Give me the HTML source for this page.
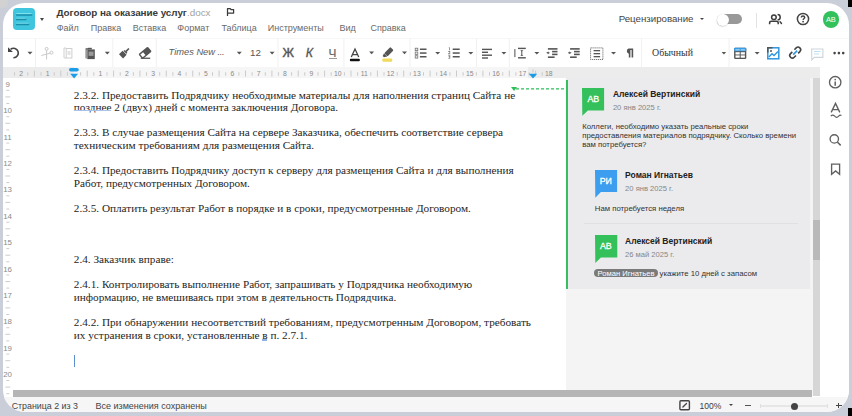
<!DOCTYPE html>
<html><head><meta charset="utf-8">
<style>
*{box-sizing:border-box;margin:0;padding:0}
html,body{width:852px;height:416px;overflow:hidden;background:#c9ced9;font-family:"Liberation Sans",sans-serif}
.a{position:absolute}
#win{position:absolute;left:3px;top:3px;width:846px;height:408.6px;border-radius:22px;background:#fff;overflow:hidden}
#c{position:absolute;left:-3px;top:-3px;width:852px;height:416px}
.t{position:absolute;white-space:nowrap;line-height:1}
.sep{position:absolute;width:1px;background:#ececec}
.car{position:absolute;width:0;height:0;border-left:2.5px solid transparent;border-right:2.5px solid transparent;border-top:2.5px solid #555}
.doc{position:absolute;left:73.8px;font-family:"Liberation Serif",serif;font-size:11.24px;color:#262626;white-space:nowrap;line-height:1}
.cm{font-size:7.75px;color:#333}
</style></head><body>
<div class="a" style="left:0;top:0;width:8px;height:8px;background:radial-gradient(circle at 0 0,#d2d2d2 55%,#c9ced9 100%)"></div>
<div class="a" style="left:848px;top:0;width:4px;height:7px;background:#000"></div>
<div class="a" style="left:848px;top:408px;width:4px;height:8px;background:#000"></div>
<div id="win"><div id="c">

<!-- HEADER -->
<div class="a" style="left:13px;top:8px;width:22px;height:22px;border-radius:4px;background:#3fc5de"></div>
<svg class="a" style="left:13px;top:8px" width="22" height="22" viewBox="13 8 22 22"><g stroke="#86e6f5" stroke-width="1"><path d="M16.4 13.6H31.5M16.4 18.3H25.5M16.4 23.3H28.5"/></g><g stroke="#1a8ea9" stroke-width="1.5" stroke-linecap="round"><path d="M16.6 15H31.6M16.6 19.6H25.8M16.6 24.5H28.6"/></g></svg>
<div class="car" style="left:39.5px;top:18px;border-left-width:2.6px;border-right-width:2.6px;border-top:3px solid #444"></div>

<div class="t" style="left:56.4px;top:7.6px;font-size:9.9px;font-weight:bold;color:#3a3a3a;letter-spacing:-0.05px">Договор на оказание услуг<span style="font-weight:normal;color:#a3a3a3;letter-spacing:0">.docx</span></div>
<svg class="a" style="left:224px;top:6px" width="12" height="12" viewBox="224 6 12 12"><path d="M227.5 16V8.7H230.3L231 9.5H233.6V13.1H227.5" fill="none" stroke="#3a3a3a" stroke-width="1.25" stroke-linejoin="round"/></svg>

<div class="t" style="left:56.7px;top:24.3px;font-size:9px;color:#6a6a6a">Файл</div>
<div class="t" style="left:90.8px;top:24.3px;font-size:9px;color:#6a6a6a">Правка</div>
<div class="t" style="left:132.7px;top:24.3px;font-size:9px;color:#6a6a6a">Вставка</div>
<div class="t" style="left:177.3px;top:24.3px;font-size:9px;color:#6a6a6a">Формат</div>
<div class="t" style="left:221.4px;top:24.3px;font-size:9px;color:#6a6a6a">Таблица</div>
<div class="t" style="left:267.7px;top:24.3px;font-size:9px;color:#6a6a6a">Инструменты</div>
<div class="t" style="left:339.6px;top:24.3px;font-size:9px;color:#6a6a6a">Вид</div>
<div class="t" style="left:370.4px;top:24.3px;font-size:9px;color:#6a6a6a">Справка</div>

<div class="t" style="left:618.7px;top:14.2px;font-size:9.7px;color:#444">Рецензирование</div>
<div class="car" style="left:700px;top:18px;border-left-width:2.4px;border-right-width:2.4px;border-top:2.5px solid #444"></div>
<div class="a" style="left:724px;top:14px;width:18.2px;height:9.8px;border-radius:0 4.9px 4.9px 0;background:#999"></div>
<div class="a" style="left:717.1px;top:13.9px;width:12.2px;height:12.2px;border-radius:50%;background:#fff;box-shadow:-0.3px 0.6px 1.2px rgba(0,0,0,.28)"></div>
<div class="sep" style="left:756px;top:12.5px;height:15px;background:#e3e3e3"></div>
<svg class="a" style="left:766px;top:11px" width="20" height="16" viewBox="766 11 20 16"><g fill="none" stroke="#3c3c3c" stroke-width="1.5"><circle cx="773.9" cy="17.3" r="2.3"/><path d="M769.6 24.2V23Q769.6 21.3 771.4 21.3H776.4Q778.2 21.3 778.2 23V24.2"/><path d="M777.6 14.6A2.6 2.6 0 0 1 777.6 19.8"/><path d="M779.6 21.4Q781.3 22.3 781.6 24.2"/></g></svg>
<svg class="a" style="left:796px;top:12.2px" width="14" height="14"><circle cx="7" cy="7" r="5.6" fill="none" stroke="#444" stroke-width="1.5"/><path d="M5.3 5.5C5.3 4.5 6 3.9 7 3.9S8.7 4.5 8.7 5.4C8.7 6.4 7.2 6.6 7.1 7.9" fill="none" stroke="#444" stroke-width="1.5"/><rect x="6.3" y="8.9" width="1.6" height="1.5" fill="#444"/></svg>
<div class="a" style="left:822.5px;top:11.3px;width:16.4px;height:16.4px;border-radius:50%;background:#33c15b"></div>
<div class="t" style="left:822.5px;width:16.4px;text-align:center;top:15.6px;font-size:7.4px;color:#fff;letter-spacing:-0.3px">AB</div>

<div class="a" style="left:3px;top:38px;width:846px;height:1px;background:#f7f7f7"></div>

<!-- TOOLBAR -->
<svg class="a" style="left:0;top:0" width="852" height="68" viewBox="0 0 852 68">
<g fill="#f1f1f1">
<rect x="35" y="38.5" width="1" height="28.5"/>
<rect x="112.3" y="38.5" width="1" height="28.5"/>
<rect x="155.8" y="38.5" width="1" height="28.5"/>
<rect x="277.5" y="38.5" width="1" height="28.5"/>
<rect x="343.4" y="38.5" width="1" height="28.5"/>
<rect x="409.5" y="38.5" width="1" height="28.5"/>
<rect x="476" y="38.5" width="1" height="28.5"/>
<rect x="508.8" y="38.5" width="1" height="28.5"/>
<rect x="641" y="38.5" width="1" height="28.5"/>
<rect x="728.6" y="38.5" width="1" height="28.5"/>
</g>
<g fill="#555">
<path d="M27.5 51.7h5l-2.5 2.8z"/>
<path d="M104.8 51.8h5l-2.5 2.6z"/>
<path d="M236.8 51.8h5l-2.5 2.6z"/>
<path d="M269.6 51.8h5l-2.5 2.6z"/>
<path d="M369.1 51.6h5l-2.5 2.6z"/>
<path d="M402 51.6h5l-2.5 2.6z"/>
<path d="M435.2 51.9h5l-2.5 2.6z"/>
<path d="M468.3 51.9h5l-2.5 2.6z"/>
<path d="M501.4 51.9h5l-2.5 2.6z"/>
<path d="M534.3 51.9h5l-2.5 2.6z"/>
<path d="M611 51.9h5l-2.5 2.6z"/>
<path d="M721.6 51.9h4.6l-2.3 2.6z"/>
<path d="M754.6 51.9h5l-2.5 2.6z"/>
</g>
<!-- undo -->
<path d="M10.6 49.4A4.7 4.7 0 1 1 13.4 57.7" fill="none" stroke="#444" stroke-width="1.6"/>
<path d="M8 47.2V52.1H12.9Z" fill="#444"/>
<!-- scissors -->
<g fill="none" stroke="#c9c9c9" stroke-width="1">
<circle cx="46.6" cy="48.9" r="1.5"/><circle cx="51.5" cy="52.7" r="1.5"/>
<path d="M46.6 50.4V59.5M41.3 55.5L50.1 53.2"/>
</g>
<!-- copy -->
<g fill="none" stroke="#cfcfcf" stroke-width="1">
<path d="M66 48H64V57.9H66"/><rect x="66.2" y="48.5" width="5.7" height="9.5"/>
</g>
<rect x="67.5" y="51" width="3" height="4" fill="#e3e3e3"/>
<!-- paste -->
<path d="M85.6 48.2H88.6V49.4H86.6V58.5H85.6Z" fill="#555"/>
<rect x="87.3" y="49.4" width="7.5" height="9.7" fill="#555"/>
<rect x="88.6" y="51.6" width="4.9" height="4.3" fill="#9a9a9a"/>
<rect x="87.8" y="47.8" width="4" height="1.6" fill="#555"/>
<!-- brush -->
<g transform="translate(123.9 53.1) rotate(45) scale(0.9)" fill="#555">
<rect x="-0.6" y="-7.6" width="1.8" height="5"/>
<rect x="-2" y="-3" width="4.6" height="1.6"/>
<rect x="-2.9" y="-0.8" width="6.4" height="5.6"/>
</g>
<!-- eraser -->
<g transform="translate(145.3 52.8) rotate(-40)">
<rect x="-6.3" y="-3.3" width="12.2" height="6.4" rx="1.2" fill="#555"/>
<rect x="-4.9" y="-1.9" width="3.6" height="3.7" fill="#fff"/>
</g>
<rect x="140.8" y="57.6" width="9.4" height="1.3" fill="#555"/>
<!-- font color A -->
<path d="M351.3 57.1L355 49.1L358.7 57.1M352.5 54.7H357.5" fill="none" stroke="#444" stroke-width="1.3"/>
<rect x="349.9" y="58.7" width="10" height="2.5" rx="1" fill="#111"/>
<!-- highlighter -->
<g transform="translate(388 52.6) rotate(45)" fill="#555">
<rect x="-2.3" y="-5.6" width="4.6" height="8.6" rx="1"/>
<path d="M-2.3 3.3H2.3L0.4 6.2H-1.3Z"/>
</g>
<rect x="382.3" y="58.4" width="9.9" height="3.3" rx="1" fill="#f1da5c"/>
<!-- bullet list -->
<g fill="#555">
</g><g fill="#e8e8e8" stroke="#777" stroke-width="0.8"><rect x="415.2" y="48.2" width="2.6" height="2.4"/><rect x="415.2" y="52" width="2.6" height="2.4"/><rect x="415.2" y="55.7" width="2.6" height="2.4"/></g><g fill="#555">
<rect x="419.9" y="48.5" width="6.6" height="1.5"/><rect x="419.9" y="52.3" width="6.6" height="1.5"/><rect x="419.9" y="56" width="6.6" height="1.5"/>
<path d="M448.6 47.6L449.6 47.2V50.3H449V48.1Z"/><path d="M448.3 51.3H450.2V52.6L448.9 53.6H450.3V54.2H448.3V53.6L449.6 52.5V51.9H448.3Z"/><path d="M448.3 55.2H450.2V58.6H448.3V58H449.6V57.2H448.6V56.6H449.6V55.8H448.3Z"/>
<rect x="452.7" y="48.5" width="7" height="1.5"/><rect x="452.7" y="52.3" width="7" height="1.5"/><rect x="452.7" y="56" width="7" height="1.5"/>
</g>
<!-- align left -->
<g fill="#555">
<rect x="482" y="48.7" width="10" height="1.4"/><rect x="482" y="51.6" width="6" height="1.4"/><rect x="482" y="54.5" width="10" height="1.4"/><rect x="482" y="57.3" width="6" height="1.4"/>
</g>
<!-- line spacing -->
<g fill="#555">
<rect x="518" y="47.7" width="7.8" height="1.4"/><rect x="518" y="57.1" width="7.8" height="1.4"/>
<rect x="521.3" y="50.4" width="1" height="5.3"/><path d="M520.2 50.3H523.4L521.8 51.6Z"/><path d="M520.2 55.8H523.4L521.8 54.5Z"/>
</g>
<rect x="514.2" y="49.1" width="1.3" height="8" fill="#777"/>
<!-- decrease indent -->
<g fill="#555">
<rect x="547.9" y="48.1" width="9.6" height="1.6"/><rect x="552.1" y="50.8" width="5.4" height="1.6"/><rect x="552.1" y="53.6" width="5.4" height="1.6"/><rect x="547.9" y="56.4" width="6.7" height="1.6"/>
<path d="M546.2 52.8L548.6 51.4V54.2Z"/><rect x="548" y="52.3" width="1.5" height="1"/>
</g>
<!-- increase indent -->
<g fill="#555">
<rect x="570.1" y="48.1" width="9.6" height="1.6"/><rect x="574" y="50.8" width="5.7" height="1.6"/><rect x="574" y="53.6" width="5.7" height="1.6"/><rect x="570.1" y="56.4" width="6.6" height="1.6"/>
<path d="M571.6 52.8L569.2 51.4V54.2Z"/><rect x="568.1" y="52.3" width="1.5" height="1"/>
</g>
<!-- margins -->
<rect x="590.6" y="47.9" width="12.3" height="11.6" fill="none" stroke="#555" stroke-width="1" stroke-dasharray="1 1"/>
<g fill="#555">
<rect x="593.6" y="50" width="6.5" height="1.3"/><rect x="593.6" y="53" width="6.5" height="1.3"/><rect x="593.6" y="56" width="6.5" height="1.3"/>
</g>
<!-- table -->
<rect x="734.1" y="47.8" width="12.2" height="11.1" rx="1.2" fill="#555"/>
<rect x="734.1" y="47.8" width="12.2" height="3.5" rx="1" fill="#3a9ee4"/>
<g fill="#fff"><rect x="735.5" y="52.2" width="4.2" height="2.3"/><rect x="740.7" y="52.2" width="4.2" height="2.3"/><rect x="735.5" y="55.4" width="4.2" height="2.3"/><rect x="740.7" y="55.4" width="4.2" height="2.3"/>
<rect x="735.5" y="49" width="4.2" height="1.6" fill="#8cc8f2"/><rect x="740.7" y="49" width="4.2" height="1.6" fill="#8cc8f2"/></g>
<!-- image -->
<rect x="767.8" y="47.8" width="11" height="11" fill="none" stroke="#2e95de" stroke-width="1.5"/>
<path d="M767.8 52.5V47.8H772.5" fill="none" stroke="#555" stroke-width="1.5"/>
<circle cx="771" cy="51" r="1" fill="#555"/>
<path d="M768.8 57L772 53.8L774 55.5L778 51.5" fill="none" stroke="#2e95de" stroke-width="1.4"/>
<!-- link -->
<g transform="translate(795.2 52.6) rotate(-45)" fill="none" stroke-width="1.6">
<path d="M-1.5 -2.6H-4A2.6 2.6 0 0 0 -4 2.6H-1.5" stroke="#444"/>
<path d="M1.5 -2.6H4A2.6 2.6 0 0 1 4 2.6H1.5" stroke="#444"/>
<path d="M-2.8 0H2.8" stroke="#2e95de"/>
</g>
<!-- comment -->
<path d="M811.6 49H822.9V57.4H814.3L811.8 60Z" fill="none" stroke="#cdd5db" stroke-width="1.1"/>
<path d="M814 51.5H820.5M814 54H819" stroke="#b5dcf0" stroke-width="0.9"/>
<!-- more -->
<g fill="#444"><circle cx="834.6" cy="53.1" r="1.3"/><circle cx="838.9" cy="53.1" r="1.3"/><circle cx="843.2" cy="53.1" r="1.3"/></g>
</svg>
<div class="t" style="left:168.6px;top:48px;font-size:9.3px;font-style:italic;color:#5a5a5a">Times New <span style="letter-spacing:-0.4px">...</span></div>
<div class="t" style="left:250px;top:48px;font-size:9.8px;color:#555">12</div>
<div class="t" style="left:282.6px;top:47px;font-size:12.4px;color:#555;-webkit-text-stroke:0.45px #555">Ж</div>
<div class="t" style="left:305.7px;top:47px;font-size:12.4px;color:#555;font-style:italic;-webkit-text-stroke:0.3px #555">К</div>
<div class="t" style="left:328.6px;top:47.6px;font-size:11.8px;color:#666;-webkit-text-stroke:0.2px #666">Ч</div>
<div class="a" style="left:329px;top:58px;width:7.6px;height:1px;background:#999"></div>
<svg class="a" style="left:623.5px;top:48px" width="10" height="10"><path d="M4.5 0.6H9.2V9.4H7.6V1.9H6.4V9.4H4.8V5.7A2.7 2.7 0 0 1 4.5 0.6Z" fill="#555"/></svg>
<div class="t" style="left:652px;top:48.3px;font-size:9.9px;font-family:'Liberation Serif',serif;color:#333">Обычный</div>


<!-- RULER -->
<div class="a" style="left:3px;top:67.3px;width:846px;height:11.1px;background:#ececec"></div>
<div class="a" style="left:74px;top:67.3px;width:454px;height:11.1px;background:#f6f6f6"></div>
<svg class="a" style="left:0;top:0" width="852" height="80" viewBox="0 0 852 80">
<g fill="#cbcbcb"><rect x="14.1" y="72.2" width="1" height="3.5"/><rect x="27.3" y="72.2" width="1" height="3.5"/><rect x="33.9" y="70.6" width="1" height="6"/><rect x="40.5" y="72.2" width="1" height="3.5"/><rect x="53.7" y="72.2" width="1" height="3.5"/><rect x="60.3" y="70.6" width="1" height="6"/><rect x="66.9" y="72.2" width="1" height="3.5"/><rect x="80.1" y="72.2" width="1" height="3.5"/><rect x="86.7" y="70.6" width="1" height="6"/><rect x="93.3" y="72.2" width="1" height="3.5"/><rect x="106.5" y="72.2" width="1" height="3.5"/><rect x="113.1" y="70.6" width="1" height="6"/><rect x="119.7" y="72.2" width="1" height="3.5"/><rect x="132.9" y="72.2" width="1" height="3.5"/><rect x="139.4" y="70.6" width="1" height="6"/><rect x="146.0" y="72.2" width="1" height="3.5"/><rect x="159.2" y="72.2" width="1" height="3.5"/><rect x="165.8" y="70.6" width="1" height="6"/><rect x="172.4" y="72.2" width="1" height="3.5"/><rect x="185.6" y="72.2" width="1" height="3.5"/><rect x="192.2" y="70.6" width="1" height="6"/><rect x="198.8" y="72.2" width="1" height="3.5"/><rect x="212.0" y="72.2" width="1" height="3.5"/><rect x="218.6" y="70.6" width="1" height="6"/><rect x="225.2" y="72.2" width="1" height="3.5"/><rect x="238.4" y="72.2" width="1" height="3.5"/><rect x="245.0" y="70.6" width="1" height="6"/><rect x="251.6" y="72.2" width="1" height="3.5"/><rect x="264.8" y="72.2" width="1" height="3.5"/><rect x="271.4" y="70.6" width="1" height="6"/><rect x="277.9" y="72.2" width="1" height="3.5"/><rect x="291.1" y="72.2" width="1" height="3.5"/><rect x="297.7" y="70.6" width="1" height="6"/><rect x="304.3" y="72.2" width="1" height="3.5"/><rect x="317.5" y="72.2" width="1" height="3.5"/><rect x="324.1" y="70.6" width="1" height="6"/><rect x="330.7" y="72.2" width="1" height="3.5"/><rect x="343.9" y="72.2" width="1" height="3.5"/><rect x="350.5" y="70.6" width="1" height="6"/><rect x="357.1" y="72.2" width="1" height="3.5"/><rect x="370.3" y="72.2" width="1" height="3.5"/><rect x="376.9" y="70.6" width="1" height="6"/><rect x="383.5" y="72.2" width="1" height="3.5"/><rect x="396.7" y="72.2" width="1" height="3.5"/><rect x="403.2" y="70.6" width="1" height="6"/><rect x="409.8" y="72.2" width="1" height="3.5"/><rect x="423.0" y="72.2" width="1" height="3.5"/><rect x="429.6" y="70.6" width="1" height="6"/><rect x="436.2" y="72.2" width="1" height="3.5"/><rect x="449.4" y="72.2" width="1" height="3.5"/><rect x="456.0" y="70.6" width="1" height="6"/><rect x="462.6" y="72.2" width="1" height="3.5"/><rect x="475.8" y="72.2" width="1" height="3.5"/><rect x="482.4" y="70.6" width="1" height="6"/><rect x="489.0" y="72.2" width="1" height="3.5"/><rect x="502.2" y="72.2" width="1" height="3.5"/><rect x="508.8" y="70.6" width="1" height="6"/><rect x="515.4" y="72.2" width="1" height="3.5"/><rect x="528.6" y="72.2" width="1" height="3.5"/><rect x="535.1" y="70.6" width="1" height="6"/><rect x="541.7" y="72.2" width="1" height="3.5"/></g>
<g fill="#8a8a8a" font-family="Liberation Sans" font-size="6.8"><text x="21.2" y="75.9" text-anchor="middle">2</text><text x="47.6" y="75.9" text-anchor="middle">1</text><text x="100.4" y="75.9" text-anchor="middle">1</text><text x="126.8" y="75.9" text-anchor="middle">2</text><text x="153.1" y="75.9" text-anchor="middle">3</text><text x="179.5" y="75.9" text-anchor="middle">4</text><text x="205.9" y="75.9" text-anchor="middle">5</text><text x="232.3" y="75.9" text-anchor="middle">6</text><text x="258.7" y="75.9" text-anchor="middle">7</text><text x="285.0" y="75.9" text-anchor="middle">8</text><text x="311.4" y="75.9" text-anchor="middle">9</text><text x="337.8" y="75.9" text-anchor="middle">10</text><text x="364.2" y="75.9" text-anchor="middle">11</text><text x="390.6" y="75.9" text-anchor="middle">12</text><text x="416.9" y="75.9" text-anchor="middle">13</text><text x="443.3" y="75.9" text-anchor="middle">14</text><text x="469.7" y="75.9" text-anchor="middle">15</text><text x="496.1" y="75.9" text-anchor="middle">16</text><text x="522.5" y="75.9" text-anchor="middle">17</text><text x="548.8" y="75.9" text-anchor="middle">18</text></g>
<rect x="69" y="68" width="9.8" height="3.6" rx="1.8" fill="#1b9de8"/><path d="M70.2 73.8H78.1L74.1 78.6Z" fill="#1b9de8"/>
<path d="M528.8 73.7H537.2L533 78.4Z" fill="#1b9ae6"/><rect x="532.5" y="69.5" width="1" height="3" fill="#c8c8c8"/>
</svg>

<!-- LEFT RULER -->
<svg class="a" style="left:0;top:0" width="20" height="400" viewBox="0 0 20 400">
<g fill="#cdcdcd"><rect x="6.3" y="393.2" width="3" height="1"/><rect x="6.3" y="89.8" width="3" height="1"/><rect x="5.3" y="96.4" width="5" height="1"/><rect x="6.3" y="103.0" width="3" height="1"/><rect x="6.3" y="116.2" width="3" height="1"/><rect x="5.3" y="122.8" width="5" height="1"/><rect x="6.3" y="129.4" width="3" height="1"/><rect x="6.3" y="142.6" width="3" height="1"/><rect x="5.3" y="149.2" width="5" height="1"/><rect x="6.3" y="155.7" width="3" height="1"/><rect x="6.3" y="168.9" width="3" height="1"/><rect x="5.3" y="175.5" width="5" height="1"/><rect x="6.3" y="182.1" width="3" height="1"/><rect x="6.3" y="195.3" width="3" height="1"/><rect x="5.3" y="201.9" width="5" height="1"/><rect x="6.3" y="208.5" width="3" height="1"/><rect x="6.3" y="221.7" width="3" height="1"/><rect x="5.3" y="228.3" width="5" height="1"/><rect x="6.3" y="234.9" width="3" height="1"/><rect x="6.3" y="248.1" width="3" height="1"/><rect x="5.3" y="254.7" width="5" height="1"/><rect x="6.3" y="261.3" width="3" height="1"/><rect x="6.3" y="274.5" width="3" height="1"/><rect x="5.3" y="281.1" width="5" height="1"/><rect x="6.3" y="287.6" width="3" height="1"/><rect x="6.3" y="300.8" width="3" height="1"/><rect x="5.3" y="307.4" width="5" height="1"/><rect x="6.3" y="314.0" width="3" height="1"/><rect x="6.3" y="327.2" width="3" height="1"/><rect x="5.3" y="333.8" width="5" height="1"/><rect x="6.3" y="340.4" width="3" height="1"/><rect x="6.3" y="353.6" width="3" height="1"/><rect x="5.3" y="360.2" width="5" height="1"/><rect x="6.3" y="366.8" width="3" height="1"/><rect x="6.3" y="380.0" width="3" height="1"/><rect x="5.3" y="386.6" width="5" height="1"/></g>
<g fill="#8a8a8a" font-family="Liberation Sans" font-size="7.9"><text x="7.6" y="86.9" text-anchor="middle">9</text><text x="7.6" y="113.3" text-anchor="middle">10</text><text x="7.6" y="139.7" text-anchor="middle">11</text><text x="7.6" y="166.0" text-anchor="middle">12</text><text x="7.6" y="192.4" text-anchor="middle">13</text><text x="7.6" y="218.8" text-anchor="middle">14</text><text x="7.6" y="245.2" text-anchor="middle">15</text><text x="7.6" y="271.6" text-anchor="middle">16</text><text x="7.6" y="297.9" text-anchor="middle">17</text><text x="7.6" y="324.3" text-anchor="middle">18</text><text x="7.6" y="350.7" text-anchor="middle">19</text><text x="7.6" y="377.1" text-anchor="middle">20</text></g>
</svg>

<!-- DOCUMENT -->
<div class="doc" style="top:89.50px">2.3.2. Предоставить Подрядчику необходимые материалы для наполнения страниц Сайта не</div>
<div class="doc" style="top:102.16px">позднее 2 (двух) дней с момента заключения Договора.</div>
<div class="doc" style="top:127.48px">2.3.3. В случае размещения Сайта на сервере Заказчика, обеспечить соответствие сервера</div>
<div class="doc" style="top:140.14px">техническим требованиям для размещения Сайта.</div>
<div class="doc" style="top:165.46px">2.3.4. Предоставить Подрядчику доступ к серверу для размещения Сайта и для выполнения</div>
<div class="doc" style="top:178.12px">Работ, предусмотренных Договором.</div>
<div class="doc" style="top:203.44px">2.3.5. Оплатить результат Работ в порядке и в сроки, предусмотренные Договором.</div>
<div class="doc" style="top:254.08px">2.4. Заказчик вправе:</div>
<div class="doc" style="top:279.40px">2.4.1. Контролировать выполнение Работ, запрашивать у Подрядчика необходимую</div>
<div class="doc" style="top:292.06px">информацию, не вмешиваясь при этом в деятельность Подрядчика.</div>
<div class="doc" style="top:317.38px">2.4.2. При обнаружении несоответствий требованиям, предусмотренным Договором, требовать</div>
<div class="doc" style="top:330.04px">их устранения в сроки, установленные в п. 2.7.1.</div>
<div class="a" style="left:74px;top:110.4px;width:36.8px;height:1px;background:#a9c3e6"></div>
<div class="a" style="left:261.5px;top:339.4px;width:5.6px;height:1.2px;background:#8fb2e3"></div>
<div class="a" style="left:73.6px;top:354.7px;width:1.2px;height:12.2px;background:#5a8fd0"></div>

<!-- COMMENTS -->
<div class="a" style="left:565.5px;top:78.4px;width:247px;height:318px;background:#f4f4f4"></div>
<div class="a" style="left:565.5px;top:78.4px;width:244.3px;height:210.4px;background:#ebebed"></div>
<div class="a" style="left:566px;top:79.5px;width:2px;height:209.4px;background:#36bf5e"></div>
<svg class="a" style="left:510px;top:86px" width="58" height="6"><path d="M6 2.8H57" stroke="#2ebd59" stroke-width="1.3" stroke-dasharray="3 2"/><path d="M1 1H7L4 5Z" fill="#2ebd59"/></svg>

<svg class="a" style="left:582.3px;top:87.9px" width="24" height="29"><path d="M0 0H22.1V22.5H5.9L0.3 27.8Z" fill="#34c15c"/></svg>
<div class="t" style="left:582.3px;width:22.1px;text-align:center;top:95px;font-size:8.8px;color:#fff;-webkit-text-stroke:0.3px #fff">AB</div>
<div class="t" style="left:612.9px;top:89.5px;font-size:8.5px;font-weight:bold;color:#222">Алексей Вертинский</div>
<div class="t" style="left:612.9px;top:103.6px;font-size:7.6px;color:#868686">20 янв 2025 г.</div>
<div class="t cm" style="left:582.2px;top:123px">Коллеги, необходимо указать реальные сроки</div>
<div class="t cm" style="left:582.2px;top:132px">предоставления материалов подрядчику. Сколько времени</div>
<div class="t cm" style="left:582.2px;top:141px">вам потребуется?</div>

<svg class="a" style="left:594.8px;top:169.9px" width="24" height="29"><path d="M0 0H22.1V22.1H5.9L0.3 27.8Z" fill="#3d9ef0"/></svg>
<div class="t" style="left:594.8px;width:22.1px;text-align:center;top:176.8px;font-size:8.8px;color:#fff;-webkit-text-stroke:0.3px #fff">РИ</div>
<div class="t" style="left:625.1px;top:170.9px;font-size:8.5px;font-weight:bold;color:#222">Роман Игнатьев</div>
<div class="t" style="left:625.1px;top:185px;font-size:7.6px;color:#868686">20 янв 2025 г.</div>
<div class="t cm" style="left:594.8px;top:205px">Нам потребуется неделя</div>

<div class="a" style="left:584px;top:223px;width:214px;height:1px;background:#e0e0e2"></div>

<svg class="a" style="left:594.7px;top:234.9px" width="24" height="29"><path d="M0 0H22.3V22.6H5.9L0.3 27.9Z" fill="#34c15c"/></svg>
<div class="t" style="left:594.7px;width:22.3px;text-align:center;top:242px;font-size:8.8px;color:#fff;-webkit-text-stroke:0.3px #fff">AB</div>
<div class="t" style="left:625px;top:236.8px;font-size:8.5px;font-weight:bold;color:#222">Алексей Вертинский</div>
<div class="t" style="left:625px;top:250.5px;font-size:7.6px;color:#868686">26 май 2025 г.</div>
<div class="a" style="left:594.2px;top:268.8px;width:63.6px;height:8.7px;border-radius:4.4px;background:#7a7a7a"></div>
<div class="t" style="left:594.2px;width:63.6px;text-align:center;top:269.5px;font-size:7.6px;color:#fff">Роман Игнатьев</div>
<div class="t cm" style="left:659.5px;top:269.5px">укажите 10 дней с запасом</div>

<!-- SCROLLBARS -->
<div class="a" style="left:812.5px;top:78.4px;width:7.5px;height:318px;background:#d6d6d6"></div>
<div class="a" style="left:812.5px;top:220px;width:7.5px;height:39.6px;background:#b9b9b9"></div>
<div class="a" style="left:13px;top:389.8px;width:799px;height:7px;background:#b5b5b5"></div>

<!-- RIGHT SIDEBAR -->
<div class="a" style="left:820px;top:67px;width:29px;height:330px;background:#fff"></div>
<svg class="a" style="left:820px;top:70px" width="29" height="110" viewBox="820 70 29 110">
<g fill="none" stroke="#606060" stroke-width="1.35">
<circle cx="835.2" cy="82.2" r="5.7"/>
<path d="M835.2 81.4V85.8" stroke-width="1.5"/>
<path d="M831.2 112.4L835.5 103.4L839.8 112.4M832.4 109.6H838.6"/>
<path d="M830.8 116.2C832.1 114.7 833.4 114.7 834.7 116.2S837.4 117.7 838.7 116.2 840.8 115 841.4 115.7" stroke-width="1.1"/>
<circle cx="834.3" cy="138.9" r="4.2"/>
<path d="M837.3 142L840.7 145.4" stroke-width="1.5"/>
<path d="M831.6 164.1H839.6V174.3L835.6 171L831.6 174.3Z"/>
</g>
<circle cx="835.2" cy="79.6" r="0.85" fill="#606060"/>
</svg>

<!-- STATUS BAR -->
<div class="a" style="left:3px;top:397px;width:846px;height:15px;background:#f6f6f6"></div>
<div class="t" style="left:11.7px;top:401.5px;font-size:8.85px;color:#444">Страница 2 из 3</div>
<div class="t" style="left:95.5px;top:401.5px;font-size:9px;color:#444">Все изменения сохранены</div>
<svg class="a" style="left:678px;top:399px" width="14" height="13" viewBox="678 399 14 13"><rect x="679.9" y="400.8" width="9.5" height="9" rx="1" fill="none" stroke="#444" stroke-width="1.4"/><path d="M682.9 407L686.5 403.5" stroke="#444" stroke-width="1.3" stroke-linecap="round"/></svg>
<div class="t" style="left:699.6px;top:401.6px;font-size:8.5px;color:#3a3a3a">100%</div>
<div class="car" style="left:728.8px;top:404.2px;border-left-width:2.85px;border-right-width:2.85px;border-top:2.8px solid #444"></div>
<div class="a" style="left:745px;top:405px;width:5.8px;height:1.1px;background:#555"></div>
<div class="a" style="left:759.5px;top:405px;width:68.5px;height:1.8px;background:#e6e6e6"></div><div class="a" style="left:759.5px;top:403.8px;width:1px;height:4.2px;background:#e0e0e0"></div><div class="a" style="left:827px;top:403.8px;width:1px;height:4.2px;background:#e0e0e0"></div>
<div class="a" style="left:790.8px;top:402.5px;width:7px;height:7px;border-radius:50%;background:#444"></div>
<div class="a" style="left:836px;top:405px;width:5.6px;height:1.3px;background:#444"></div>
<div class="a" style="left:838.2px;top:403px;width:1.3px;height:5.4px;background:#444"></div>

</div></div>
</body></html>
